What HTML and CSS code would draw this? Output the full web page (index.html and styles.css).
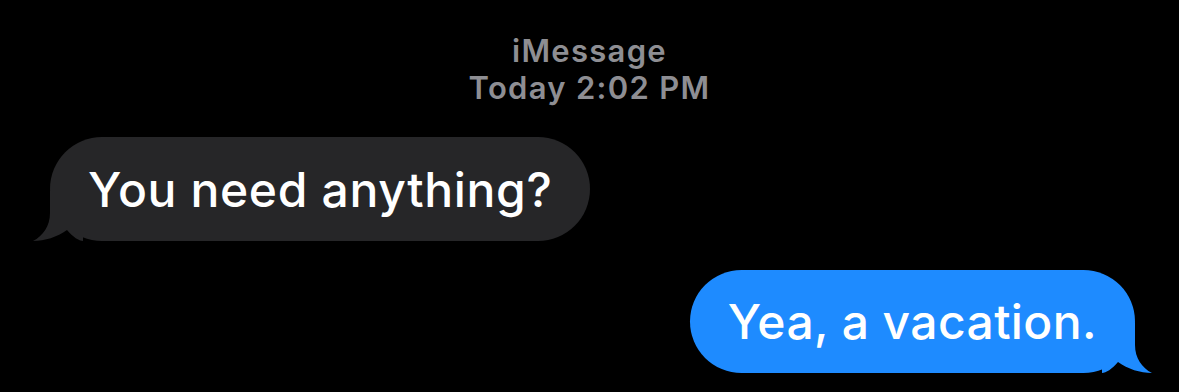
FILE: index.html
```html
<!DOCTYPE html>
<html>
<head>
<meta charset="utf-8">
<link rel="stylesheet" href="styles.css">
</head>
<body>
<div class="chat">
  <div class="header">
    <div class="service">iMessage</div>
    <div class="time">Today 2:02 PM</div>
  </div>
  <div class="row row-in">
    <div class="bubble bubble-in">
      <span>You need anything?</span>
      <svg class="tail tail-in" width="50" height="50" viewBox="0 0 50 50"><path d="M17 0 L17 22 C17 35 10 45 0 50 C12 50 24 46 34 39 C40 46 46 50 50 50 L50 0 Z"/></svg>
    </div>
  </div>
  <div class="row row-out">
    <div class="bubble bubble-out">
      <span>Yea, a vacation.</span>
      <svg class="tail tail-out" width="50" height="50" viewBox="0 0 50 50"><path d="M17 0 L17 22 C17 35 10 45 0 50 C12 50 24 46 34 39 C40 46 46 50 50 50 L50 0 Z"/></svg>
    </div>
  </div>
</div>
</body>
</html>
```

FILE: styles.css
```css
html, body {
  margin: 0;
  padding: 0;
  background: #000;
}
.chat {
  width: 1179px;
  height: 392px;
  box-sizing: border-box;
  padding-top: 32px;
  font-family: Inter, "Noto Sans", sans-serif;
  overflow: hidden;
}
.header {
  text-align: center;
  color: #8e8e93;
  font-size: 31px;
  font-weight: 600;
  line-height: 37px;
  letter-spacing: 1.3px;
}
.row {
  display: flex;
}
.row-in {
  margin-top: 31px;
  padding-left: 50px;
}
.row-out {
  margin-top: 29px;
  justify-content: flex-end;
  padding-right: 44px;
}
.bubble {
  position: relative;
  display: flex;
  align-items: center;
  box-sizing: border-box;
  height: 104px;
  border-radius: 52px;
  padding: 0 38px;
  font-size: 48px;
  font-weight: 500;
  color: #fff;
  letter-spacing: 0.65px;
}
.bubble span {
  position: relative;
  z-index: 1;
}
.bubble-in {
  background: #262628;
}
.bubble-out {
  background: #1e8bff;
  height: 103px;
  letter-spacing: 0.4px;
}
.tail {
  position: absolute;
  bottom: 0;
}
.tail-in {
  left: -17px;
  fill: #262628;
}
.tail-out {
  right: -17px;
  fill: #1e8bff;
  transform: scaleX(-1);
}
```
